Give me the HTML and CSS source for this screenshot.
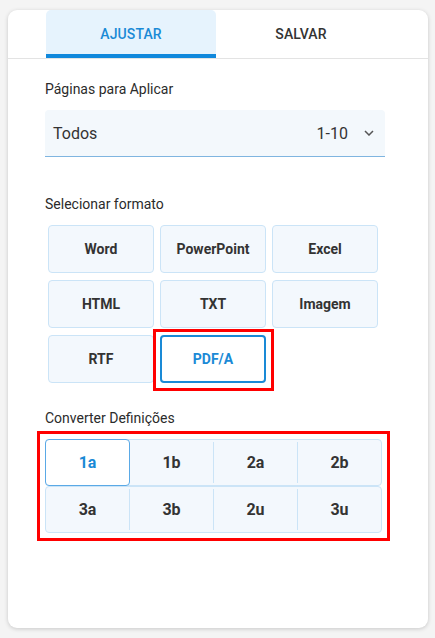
FILE: index.html
```html
<!DOCTYPE html>
<html lang="pt">
<head>
<meta charset="utf-8">
<link rel="stylesheet" href="styles.css">
</head>
<body>
<div class="card">
  <div class="tabs">
    <div class="tab active">AJUSTAR</div>
    <div class="tab">SALVAR</div>
  </div>
  <div class="content">
    <div class="label first">Páginas para Aplicar</div>
    <div class="select">
      <span class="sel-text">Todos</span>
      <span class="sel-range">1-10</span>
      <svg class="chev" width="10" height="6" viewBox="0 0 10 6"><path d="M1 1l4 4 4-4" fill="none" stroke="#555" stroke-width="1.5"/></svg>
    </div>
    <div class="label sec">Selecionar formato</div>
    <div class="formats">
      <div class="fbtn">Word</div>
      <div class="fbtn">PowerPoint</div>
      <div class="fbtn">Excel</div>
      <div class="fbtn">HTML</div>
      <div class="fbtn">TXT</div>
      <div class="fbtn">Imagem</div>
      <div class="fbtn">RTF</div>
      <div class="fbtn selected">PDF/A</div>
    </div>
    <div class="label sec2">Converter Definições</div>
    <div class="segs">
      <div class="segrow">
        <div class="seg on">1a</div>
        <div class="seg">1b</div>
        <div class="seg">2a</div>
        <div class="seg">2b</div>
      </div>
      <div class="segrow">
        <div class="seg">3a</div>
        <div class="seg">3b</div>
        <div class="seg">2u</div>
        <div class="seg">3u</div>
      </div>
    </div>
  </div>
</div>
</body>
</html>
```

FILE: styles.css
```css
html, body { margin: 0; padding: 0; }
body {
  background: #f4f4f4;
  font-family: Roboto, "Liberation Sans", sans-serif;
  color: #333;
  padding: 10px 7px 10px 8px;
}
.card {
  background: #fff;
  border-radius: 9px;
  box-shadow: 0 1px 4px rgba(0,0,0,0.18);
  height: 618px;
  box-sizing: border-box;
  overflow: hidden;
}
.tabs {
  display: flex;
  border-bottom: 1px solid #e3e3e3;
  padding-left: 38px;
}
.tab {
  width: 170px;
  height: 48px;
  box-sizing: border-box;
  display: flex;
  align-items: center;
  justify-content: center;
  font-size: 14px;
  font-weight: 500;
  color: #333;
  letter-spacing: 0.1px;
}
.tab.active {
  background: #e6f3fd;
  color: #1a8ad6;
  border-bottom: 4px solid #1088dc;
  padding-top: 4px;
  border-radius: 5px 5px 0 0;
}
.content {
  padding: 0 43px 0 37px;
}
.label {
  font-size: 14px;
  line-height: 20px;
  color: #2b2b2b;
  margin-bottom: 11px;
}
.label.first { margin-top: 20px; }
.label.sec { margin-top: 37px; }
.label.sec2 { margin-top: 25px; }
.select {
  height: 47px;
  box-sizing: border-box;
  background: #f3f8fc;
  border-bottom: 1px solid #7fb5e0;
  border-radius: 4px 4px 0 0;
  display: flex;
  align-items: center;
  padding: 0 11px 0 8px;
  font-size: 16px;
  color: #333;
}
.sel-text { flex: 1; }
.sel-range { margin-right: 16px; }
.chev { display: block; }
.formats {
  display: grid;
  grid-template-columns: repeat(3, 106px);
  column-gap: 6px;
  row-gap: 7px;
  padding-left: 3px;
}
.fbtn {
  height: 48px;
  box-sizing: border-box;
  border: 1px solid #cbe4f7;
  background: #f3f8fd;
  border-radius: 4px;
  display: flex;
  align-items: center;
  justify-content: center;
  font-size: 14px;
  font-weight: 700;
  color: #333;
}
.fbtn.selected {
  position: relative;
  background: #fff;
  border: 2px solid #1a8ad6;
  color: #1a8ad6;
}
.fbtn.selected::after {
  content: "";
  position: absolute;
  top: -8px;
  left: -9px;
  right: -10px;
  bottom: -10px;
  border: 3px solid #f00;
}
.segs {
  width: 337px;
  outline: 3px solid #f00;
  outline-offset: 5px;
}
.segrow {
  display: flex;
  height: 47px;
  border: 1px solid #cbe4f7;
  border-radius: 4px;
  background: #f3f8fd;
  box-sizing: border-box;
}
.seg {
  flex: 1;
  display: flex;
  align-items: center;
  justify-content: center;
  font-size: 16px;
  font-weight: 700;
  color: #333;
  border-left: 1px solid #cbe4f7;
  margin: 2px 0;
}
.seg:first-child { border-left: none; }
.seg.on {
  background: #fff;
  color: #1a8ad6;
  border: 1px solid #5aa9e6;
  border-radius: 4px;
  margin: -1px 0 -1px -1px;
}
.seg.on + .seg { border-left: none; }
```
